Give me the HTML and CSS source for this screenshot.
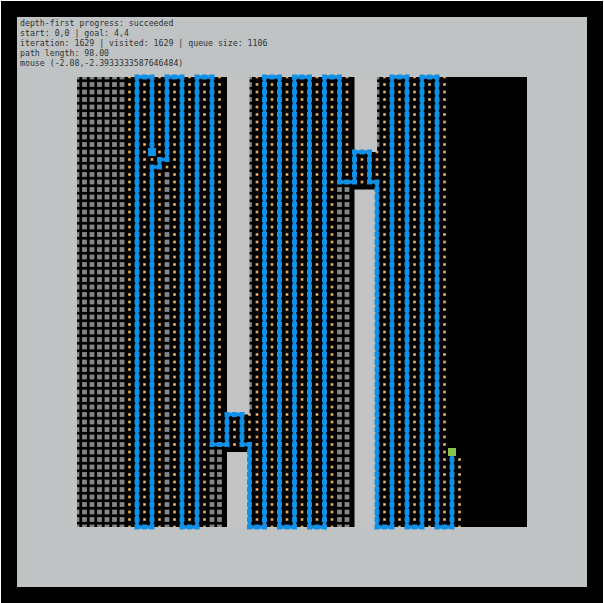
FILE: index.html
```
<!DOCTYPE html>
<html lang="en">
<head>
<meta charset="utf-8">
<title>Path planner</title>
<link rel="stylesheet" href="styles.css">
</head>
<body>
<main class="world">
<div class="log">
<p>depth-first progress: succeeded</p>
<p>start: 0,0 | goal: 4,4</p>
<p>iteration: 1629 | visited: 1629 | queue size: 1106</p>
<p>path length: 98.00</p>
<p>mouse (-2.08,-2.3933333587646484)</p>
</div>
<svg class="map" id="map" width="460" height="460" viewBox="-5 -5 460 460"></svg>
</main>
<script src="map.js"></script>
</body>
</html>
```
FILE: styles.css
```
* {
  box-sizing: border-box;
}

html {
  background: #fff;
}

body {
  margin: 0;
  padding: 1px;
  width: 604px;
  height: 603px;
  overflow: hidden;
}

.world {
  width: 602px;
  height: 602px;
  border: 16px solid #000;
  background: #bfc3c4;
}

.log {
  height: 55px;
  padding: 1px 0 0 3px;
  font: 8.22px/10px "DejaVu Sans Mono", monospace;
  color: #303334;
}

.log p {
  margin: 0;
  white-space: nowrap;
}

.map {
  display: block;
  margin-left: 55px;
}

.field {
  fill: #000;
}

.wall {
  fill: #c1c3c4;
}

.visited {
  fill: #848787;
}

.queued {
  fill: #c6944a;
}

.queued-core {
  fill: #f3cd84;
}

.edge {
  fill: none;
  stroke: #1090e6;
  stroke-width: 3.6;
}

.step,
.start {
  fill: #1090e6;
}

.goal {
  fill: #8bc34a;
}
```
FILE: map.js
```
const S = 7.5;
const N = 60;
const svg = document.getElementById('map');
const route = [[10,10],[10,0],[8,0],[8,60],[10,60],[10,12],[11,12],[11,11],[12,11],
  [12,0],[14,0],[14,60],[16,60],[16,0],[18,0],[18,49],[20,49],[20,45],[22,45],[22,49],
  [23,49],[23,60],[25,60],[25,0],[27,0],[27,60],[29,60],[29,0],[31,0],[31,60],[33,60],
  [33,0],[35,0],[35,14],[37,14],[37,10],[39,10],[39,14],[40,14],[40,60],[42,60],[42,0],
  [44,0],[44,60],[46,60],[46,0],[48,0],[48,60],[50,60],[50,50]];

const nodes = new Map();
for (let k = 1; k < route.length; k++) {
  let [x, y] = route[k - 1];
  const [u, v] = route[k];
  nodes.set(x + ',' + y, [x, y]);
  while (x !== u || y !== v) {
    x += Math.sign(u - x);
    y += Math.sign(v - y);
    nodes.set(x + ',' + y, [x, y]);
  }
}

function square(cls, i, j, size) {
  return `<rect class="${cls}" x="${i * S - size / 2}" y="${j * S - size / 2}" width="${size}" height="${size}"/>`;
}

function state(i, j) {
  if (nodes.has(i + ',' + j)) return '';
  if (i < 7) return 'visited';
  if (i === 12 && j > 12) return 'visited';
  if ((i === 18 || i === 19) && j > 49) return 'visited';
  if ((i === 35 || i === 36) && j > 14) return 'visited';
  if (i === 23) return j < 45 ? 'visited' : 'queued';
  if (i === 40) return j < 10 ? 'visited' : 'queued';
  if (i === 21) return j > 45 && j < 50 ? 'queued' : '';
  if (i === 38) return j > 10 && j < 15 ? 'queued' : '';
  if (i === 20 || i === 22 || i === 37 || i === 39) return '';
  if (i > 51 || i === 50) return '';
  if (i === 51) return j > 50 ? 'queued' : '';
  return 'queued';
}

let cells = '';
for (let i = 0; i <= N; i++) {
  for (let j = 0; j <= N; j++) {
    const kind = state(i, j);
    if (kind === 'visited') cells += square('visited', i, j, 4.8);
    if (kind === 'queued') cells += square('queued', i, j, 2.8) + square('queued-core', i, j, 1.2);
  }
}

const walls = [[20, 0, 45], [20, 50, 60], [37, 0, 10], [37, 15, 60]].map(([i, a, b]) =>
  `<rect class="wall" x="${i * S}" y="${a * S}" width="${3 * S}" height="${(b - a) * S}"/>`).join('');
const steps = [...nodes.values()].map(([i, j]) => square('step', i, j, 5)).join('');

svg.innerHTML = `<clipPath id="bounds"><rect width="450" height="450"/></clipPath>
  <g clip-path="url(#bounds)"><rect class="field" width="450" height="450"/>${cells}${walls}</g>
  <polyline class="edge" points="${route.map(([i, j]) => i * S + ',' + j * S).join(' ')}"/>
  ${steps}${square('start', 10, 10, 8)}${square('goal', 50, 50, 8)}`;
```
